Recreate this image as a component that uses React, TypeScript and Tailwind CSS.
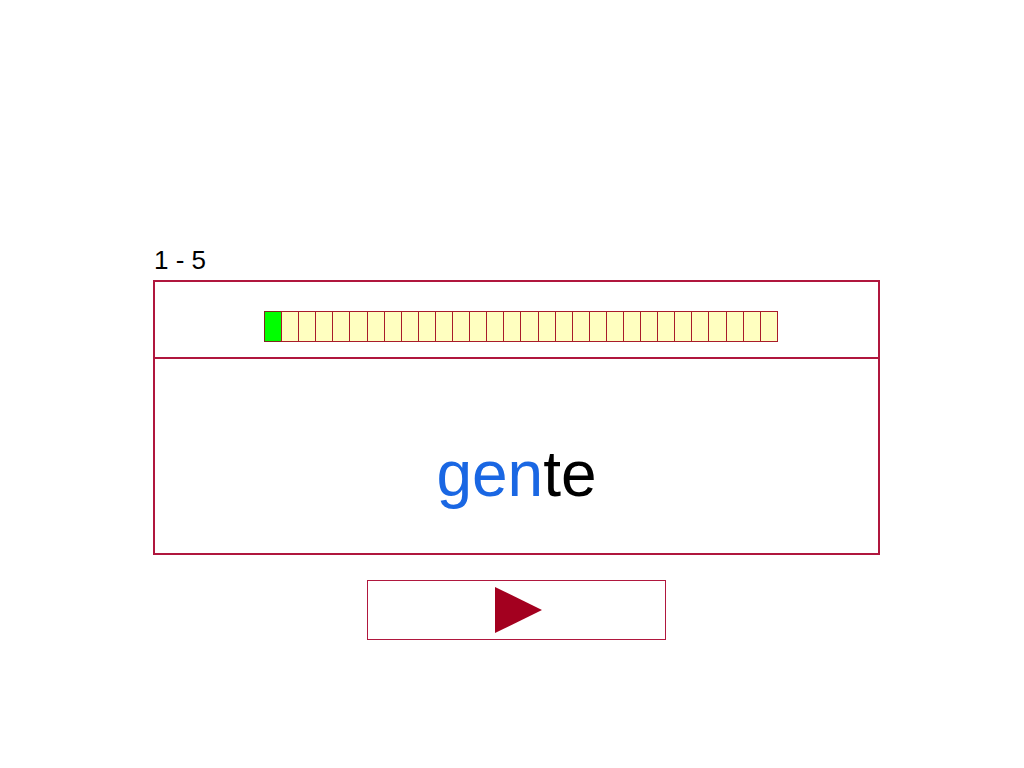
import React from 'react';

const CELLS = 30;

const App = () => {
  const cells = Array.from({ length: CELLS }, (_, i) => i);

  return (
    <div className="w-[1024px] h-[768px] bg-white font-['Liberation_Sans',Arial,sans-serif]">
      <div className="pt-[246px] pl-[153px] w-[879px]">
        {/* counter */}
        <div className="text-[26px] leading-[29px] text-black pl-[1px] mb-[5px]">1 - 5</div>

        {/* card */}
        <div className="w-[727px] border-2 border-[#b0173e]">
          {/* progress row */}
          <div className="h-[77px] pt-[29px] pl-[109px] border-b-2 border-[#b0173e]">
            <div className="flex w-[514px] h-[31px] border-r border-[#a81c2a]">
              {cells.map((i) => (
                <div
                  key={i}
                  className={
                    i === 0
                      ? 'flex-1 border-l border-y border-[#7a2a20] bg-[#00ff00]'
                      : 'flex-1 border-l border-y border-[#a81c2a] bg-[#ffffc0]'
                  }
                />
              ))}
            </div>
          </div>

          {/* word */}
          <div className="h-[194px] pt-[79px] text-center">
            <span className="text-[64px] leading-[72px]">
              <span className="text-[#1a67e3]">gen</span>
              <span className="text-black">te</span>
            </span>
          </div>
        </div>

        {/* next button */}
        <button className="mt-[25px] ml-[214px] w-[299px] h-[60px] border border-[#b0173e] bg-white flex items-center justify-center">
          <svg className="ml-1" width="47" height="46" viewBox="0 0 47 46">
            <polygon points="0,0 47,23 0,46" fill="#a3001f" />
          </svg>
        </button>
      </div>
    </div>
  );
};

export default App;
